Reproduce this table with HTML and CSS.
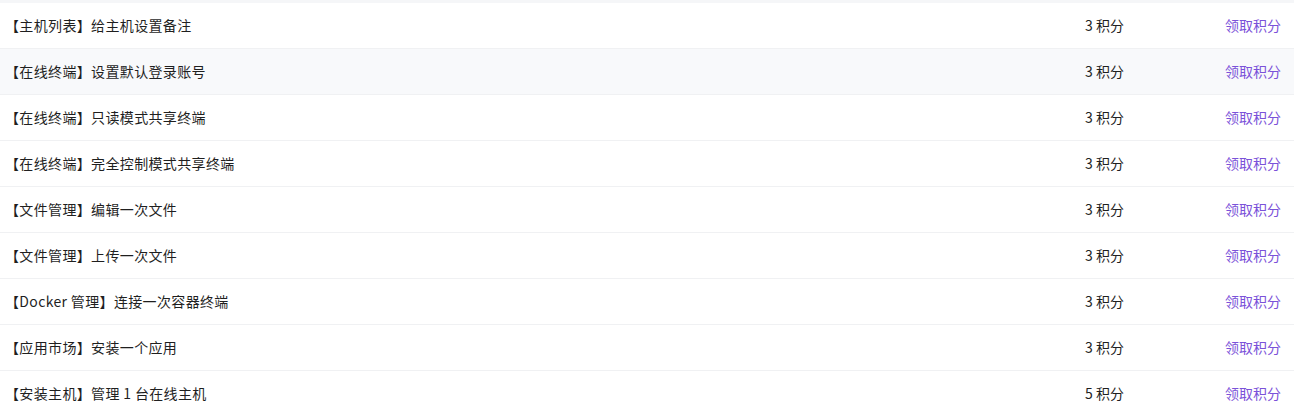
FILE: index.html
```html
<!DOCTYPE html>
<html lang="zh-CN">
<head>
<meta charset="utf-8">
<link rel="stylesheet" href="styles.css">
</head>
<body>
<div class="top-strip"></div>
<div class="task-list">
  <div class="task-row"><div class="task-name">【主机列表】给主机设置备注</div><div class="task-points">3 积分</div><div class="task-action"><a class="claim">领取积分</a></div></div>
  <div class="task-row hover"><div class="task-name">【在线终端】设置默认登录账号</div><div class="task-points">3 积分</div><div class="task-action"><a class="claim">领取积分</a></div></div>
  <div class="task-row"><div class="task-name">【在线终端】只读模式共享终端</div><div class="task-points">3 积分</div><div class="task-action"><a class="claim">领取积分</a></div></div>
  <div class="task-row"><div class="task-name">【在线终端】完全控制模式共享终端</div><div class="task-points">3 积分</div><div class="task-action"><a class="claim">领取积分</a></div></div>
  <div class="task-row"><div class="task-name">【文件管理】编辑一次文件</div><div class="task-points">3 积分</div><div class="task-action"><a class="claim">领取积分</a></div></div>
  <div class="task-row"><div class="task-name">【文件管理】上传一次文件</div><div class="task-points">3 积分</div><div class="task-action"><a class="claim">领取积分</a></div></div>
  <div class="task-row"><div class="task-name">【Docker 管理】连接一次容器终端</div><div class="task-points">3 积分</div><div class="task-action"><a class="claim">领取积分</a></div></div>
  <div class="task-row"><div class="task-name">【应用市场】安装一个应用</div><div class="task-points">3 积分</div><div class="task-action"><a class="claim">领取积分</a></div></div>
  <div class="task-row"><div class="task-name">【安装主机】管理 1 台在线主机</div><div class="task-points">5 积分</div><div class="task-action"><a class="claim">领取积分</a></div></div>
</div>
</body>
</html>
```
FILE: styles.css
```css
html, body {
  margin: 0;
  padding: 0;
  background: #ffffff;
}
body {
  font-family: "Noto Sans CJK SC", "Noto Sans", sans-serif;
  font-size: 14px;
  color: #1f1f1f;
}
.top-strip {
  height: 3px;
  background: #f5f6f8;
}
.task-list {
  display: flex;
  flex-direction: column;
}
.task-row {
  display: flex;
  align-items: center;
  height: 45px;
  box-sizing: border-box;
  height: 46px;
  border-bottom: 1px solid #f0f1f3;
  padding: 0 14px 2px 5px;
}
.task-row.hover {
  background: #f8f9fb;
}
.task-name {
  flex: 1;
  white-space: nowrap;
  letter-spacing: 0.35px;
}
.task-points {
  width: 140px;
  white-space: nowrap;
}
.task-action {
  width: 55px;
  text-align: right;
  white-space: nowrap;
}
.claim {
  color: #7b52d9;
  cursor: pointer;
}
```
